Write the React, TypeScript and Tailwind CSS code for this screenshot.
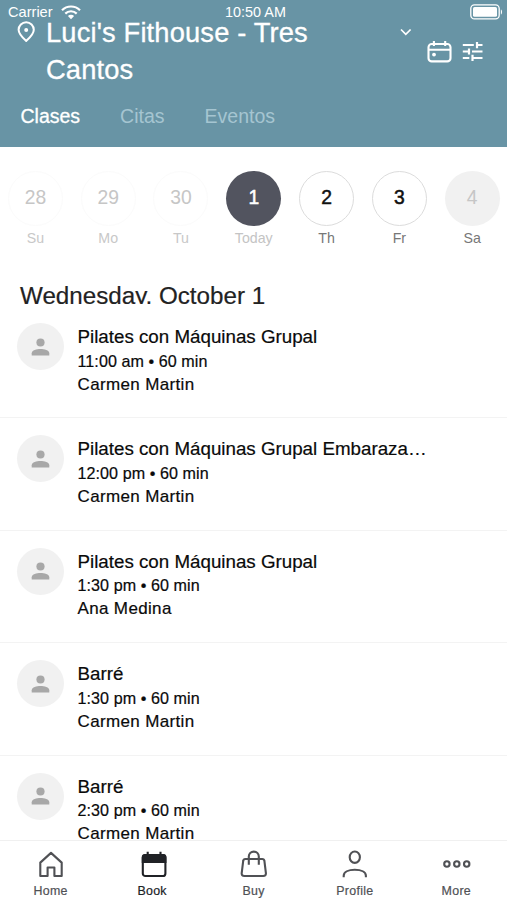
import React from "react";

interface Day {
  num: string;
  label: string;
  circle: string;
  text: string;
}

interface Session {
  title: string;
  time: string;
  teacher: string;
}

const tabs = [
  { name: "Clases", style: "text-white [-webkit-text-stroke:0.3px]" },
  { name: "Citas", style: "text-[#a5c5d1]" },
  { name: "Eventos", style: "text-[#a5c5d1]" },
];

const days: Day[] = [
  { num: "28", label: "Su", circle: "border border-[#fbfbfb] text-[#c6c6c6]", text: "text-[#c8c8c8]" },
  { num: "29", label: "Mo", circle: "border border-[#fbfbfb] text-[#c6c6c6]", text: "text-[#c8c8c8]" },
  { num: "30", label: "Tu", circle: "border border-[#fbfbfb] text-[#c6c6c6]", text: "text-[#c8c8c8]" },
  { num: "1", label: "Today", circle: "bg-[#52545f] text-white [-webkit-text-stroke:0.5px]", text: "text-[#c4c4c4]" },
  { num: "2", label: "Th", circle: "border border-[#dcdcdc] text-[#111] [-webkit-text-stroke:0.5px]", text: "text-[#777]" },
  { num: "3", label: "Fr", circle: "border border-[#dcdcdc] text-[#111] [-webkit-text-stroke:0.5px]", text: "text-[#777]" },
  { num: "4", label: "Sa", circle: "bg-[#f1f1f1] text-[#c6c6c6]", text: "text-[#777]" },
];

const sessions: Session[] = [
  { title: "Pilates con Máquinas Grupal", time: "11:00 am • 60 min", teacher: "Carmen Martin" },
  { title: "Pilates con Máquinas Grupal Embaraza…", time: "12:00 pm • 60 min", teacher: "Carmen Martin" },
  { title: "Pilates con Máquinas Grupal", time: "1:30 pm • 60 min", teacher: "Ana Medina" },
  { title: "Barré", time: "1:30 pm • 60 min", teacher: "Carmen Martin" },
  { title: "Barré", time: "2:30 pm • 60 min", teacher: "Carmen Martin" },
];

const StatusBar: React.FC = () => (
  <div className="flex h-6 items-center text-[14.6px] leading-4">
    <div className="flex flex-1 items-center gap-2 pl-2">
      <span>Carrier</span>
      <svg width="20" height="15" viewBox="0 0 20 15" fill="none" stroke="white" strokeWidth="2.2">
        <path d="M1 5.2a12.8 12.8 0 0 1 18 0" />
        <path d="M4.3 8.6a8.1 8.1 0 0 1 11.4 0" />
        <path d="M10 14.2 6.9 11a4.4 4.4 0 0 1 6.2 0Z" fill="white" stroke="none" />
      </svg>
    </div>
    <span className="text-[14.4px]">10:50 AM</span>
    <div className="flex flex-1 justify-end pr-1">
      <svg width="33" height="16" viewBox="0 0 33 16" fill="none">
        <rect x="0.8" y="0.9" width="28.4" height="14" rx="3.6" stroke="white" strokeWidth="1.3" />
        <rect x="3" y="3" width="24" height="9.8" rx="1.6" fill="white" />
        <path d="M30.9 5.4c1.5.6 1.5 4.4 0 5Z" fill="white" />
      </svg>
    </div>
  </div>
);

const Header: React.FC = () => (
  <header className="h-[146.5px] shrink-0 bg-[#6894a5] text-white">
    <StatusBar />
    <div className="-mt-[9px] flex items-start">
      <svg className="mt-[6px] ml-[17px]" width="19" height="22" viewBox="0 0 19 22" fill="none" stroke="white" strokeWidth="2">
        <path d="M9.2 20C6.7 17.7 1.6 13.3 1.6 8.8a7.6 7.6 0 0 1 15.2 0c0 4.5-5.1 8.9-7.6 11.2Z" strokeLinejoin="round" />
        <circle cx="9.2" cy="9" r="2" fill="white" stroke="none" />
      </svg>
      <h1 className="ml-[10px] w-[300px] text-[27.3px] leading-[36.5px] tracking-[0.15px] [-webkit-text-stroke:0.3px]">
        Luci's Fithouse - Tres Cantos
      </h1>
      <svg className="mt-[13px] ml-[54px]" width="12" height="9" viewBox="0 0 12 9" fill="none" stroke="white" strokeWidth="1.7">
        <path d="m1 1.5 4.8 4.8 4.8-4.8" />
      </svg>
      <div className="mt-[25px] ml-[14px] flex gap-[10px]">
        <svg width="26" height="24" viewBox="0 0 26 24" fill="none" stroke="white" strokeWidth="2.1">
          <rect x="2.5" y="4" width="22" height="17.4" rx="3.2" />
          <path d="M2.5 9.8h22M7.9 1v5M19.2 1v5" />
          <circle cx="8" cy="14.6" r="1.9" fill="white" stroke="none" />
        </svg>
        <svg width="22" height="22" viewBox="0 0 22 22" fill="none" stroke="white" strokeWidth="2.2">
          <path d="M.8 5h11M15 5h5.5M15 2v6.2M.8 11.5h6M10 11.5h10.5M7 8.4v6.2M.8 18h6.5M10.500 18h10M10.500 14.800V21" />
        </svg>
      </div>
    </div>
    <nav className="mt-[15.5px] flex gap-10 pl-[20.5px] text-[19.5px] leading-[24px]">
      {tabs.map((tab) => (
        <span key={tab.name} className={tab.style}>{tab.name}</span>
      ))}
    </nav>
  </header>
);

const DayPicker: React.FC = () => (
  <div className="mt-[24px] -ml-px flex">
    {days.map((day) => (
      <div key={day.label} className="flex w-[72.8px] shrink-0 flex-col items-center">
        <div className={`flex size-[55px] items-center justify-center rounded-full pt-px text-[19.3px] ${day.circle}`}>
          {day.num}
        </div>
        <span className={`mt-[3px] text-[14.2px] leading-[18px] ${day.text}`}>{day.label}</span>
      </div>
    ))}
  </div>
);

const SessionRow: React.FC<{ session: Session }> = ({ session }) => (
  <div className="flex h-[112.4px] shrink-0 border-b border-[#f3f3f3] pl-[17px] text-[#0a0a0a]">
    <div className="mt-[17px] flex size-[47px] shrink-0 items-center justify-center rounded-full bg-[#f1f1f1]">
      <svg width="19" height="18" viewBox="0 0 19 18" fill="#a8a8a8">
        <circle cx="9.5" cy="4.5" r="4.1" />
        <path d="M.7 17.5v-2.2c0-3 5-4.3 8.8-4.3s8.8 1.3 8.8 4.3v2.2Z" />
      </svg>
    </div>
    <div className="ml-[13.5px] pt-[19px] whitespace-nowrap [-webkit-text-stroke:0.2px]">
      <div className="text-[18.75px] leading-6">{session.title}</div>
      <div className="mt-[0.5px] text-[16.1px] leading-[23px] tracking-[0.07px]">{session.time}</div>
      <div className="text-[17px] leading-[23.5px] tracking-[0.35px]">{session.teacher}</div>
    </div>
  </div>
);

const BottomNav: React.FC = () => {
  const items = [
    {
      name: "Home",
      icon: (
        <path d="M4.3 26V12.6L15 2.9l10.7 9.7V26h-7.3v-8.5h-6.8V26Z" strokeLinejoin="round" />
      ),
    },
    {
      name: "Book",
      icon: (
        <>
          <rect x="4.8" y="5" width="22.6" height="21" rx="2.6" />
          <path d="M4.8 12V7.4Q4.8 5 7.2 5H25Q27.4 5 27.4 7.4V12ZM9.7 1.8v4M22.5 1.8v4" fill="currentColor" />
        </>
      ),
    },
    {
      name: "Buy",
      icon: (
        <>
          <path d="M6.4 9h16.8q2 0 2.2 2l1.5 12q.3 3-2.7 3H5.400q-3 0-2.700-3l1.500-12q.2-2 2.200-2Z" />
          <path d="M9.8 14.7V6.6a5 5 0 0 1 10 0v8.1" />
        </>
      ),
    },
    {
      name: "Profile",
      icon: (
        <>
          <ellipse cx="14.8" cy="7.2" rx="5.1" ry="5.7" />
          <path d="M3.7 27.3v-1.6c0-3.7 4.6-6 11.1-6s11.1 2.3 11.1 6v1.6" />
        </>
      ),
    },
    {
      name: "More",
      icon: (
        <>
          <circle cx="4.9" cy="14" r="2.7" />
          <circle cx="14.8" cy="14" r="2.7" />
          <circle cx="24.7" cy="14" r="2.7" />
        </>
      ),
    },
  ];

  return (
    <nav className="z-10 flex h-[60px] shrink-0 border-t border-[#f0f0f0] bg-white">
      {items.map((item) => (
        <div
          key={item.name}
          className={`flex flex-1 flex-col items-center pt-[9px] ${item.name === "Book" ? "text-[#202226]" : "text-[#505155]"}`}
        >
          <svg width="29" height="29" viewBox="0 0 29 29" fill="none" stroke="currentColor" strokeWidth="2.1">
            {item.icon}
          </svg>
          <span className="mt-[4px] text-[12.4px] leading-4 tracking-[0.3px] [-webkit-text-stroke:0.2px]">{item.name}</span>
        </div>
      ))}
    </nav>
  );
};

const App: React.FC = () => {
  return (
    <div className="flex h-[900px] w-[507px] flex-col overflow-hidden bg-white font-['Liberation_Sans',Arial,sans-serif]">
      <Header />
      <main className="flex min-h-0 flex-1 flex-col overflow-hidden">
        <DayPicker />
        <h2 className="mt-[34.5px] mb-[2px] h-[23px] shrink-0 overflow-hidden pl-5 text-[24.2px] leading-[29px] text-[#222] [-webkit-text-stroke:0.2px]">
          Wednesday, October 1
        </h2>
        <div className="flex flex-col">
          {sessions.map((session, i) => (
            <SessionRow key={i} session={session} />
          ))}
        </div>
      </main>
      <BottomNav />
    </div>
  );
};

export default App;
